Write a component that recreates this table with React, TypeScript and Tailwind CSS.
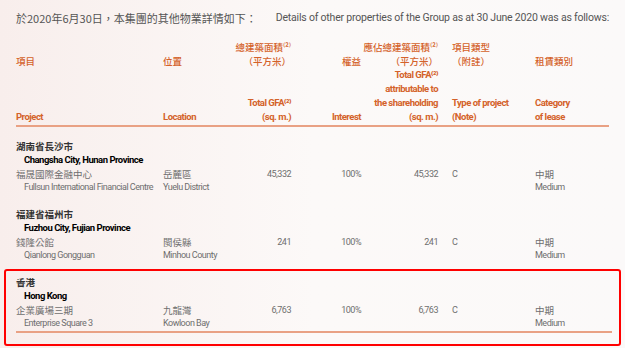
import React from 'react';

type Prop = {
  provinceZh: string;
  provinceEn: string;
  nameZh: string;
  nameEn: string;
  locZh: string;
  locEn: string;
  gfa: string;
  interest: string;
  attr: string;
  type: string;
};

const rows: Prop[] = [
  {
    provinceZh: '湖南省長沙市',
    provinceEn: 'Changsha City, Hunan Province',
    nameZh: '福晟國際金融中心',
    nameEn: 'Fullsun International Financial Centre',
    locZh: '岳麓區',
    locEn: 'Yuelu District',
    gfa: '45,332',
    interest: '100%',
    attr: '45,332',
    type: 'C',
  },
  {
    provinceZh: '福建省福州市',
    provinceEn: 'Fuzhou City, Fujian Province',
    nameZh: '錢隆公館',
    nameEn: 'Qianlong Gongguan',
    locZh: '閩侯縣',
    locEn: 'Minhou County',
    gfa: '241',
    interest: '100%',
    attr: '241',
    type: 'C',
  },
];

const hk: Prop = {
  provinceZh: '香港',
  provinceEn: 'Hong Kong',
  nameZh: '企業廣場三期',
  nameEn: 'Enterprise Square 3',
  locZh: '九龍灣',
  locEn: 'Kowloon Bay',
  gfa: '6,763',
  interest: '100%',
  attr: '6,763',
  type: 'C',
};

const cols = 'grid grid-cols-[147px_77px_51px_70px_77px_97px_73px] whitespace-nowrap';
const zhFont = "font-['Noto_Sans_CJK_TC',sans-serif]";
// condensed look for the small English text
const en = 'text-[9px] tracking-[-0.5px]';

function PropertyRow({ p }: { p: Prop }) {
  return (
    <div className="text-[#6e6e6e]">
      <div className={`text-[9.5px] leading-[14px] font-bold text-[#333] ${zhFont}`}>{p.provinceZh}</div>
      <div className="pl-2 text-[9.5px] tracking-[-0.5px] leading-[14px] font-bold text-black">{p.provinceEn}</div>
      <div className={cols}>
        <div>
          <div className={`text-[9.5px] leading-[14px] ${zhFont}`}>{p.nameZh}</div>
          <div className={`pl-2 leading-[13px] ${en}`}>{p.nameEn}</div>
        </div>
        <div>
          <div className={`text-[9.5px] leading-[14px] ${zhFont}`}>{p.locZh}</div>
          <div className={`leading-[13px] ${en}`}>{p.locEn}</div>
        </div>
        <div className={`text-right leading-[14px] ${en}`}>{p.gfa}</div>
        <div className={`text-right leading-[14px] ${en}`}>{p.interest}</div>
        <div className={`text-right leading-[14px] ${en}`}>{p.attr}</div>
        <div className={`pl-[14px] leading-[14px] ${en}`}>{p.type}</div>
        <div>
          <div className={`text-[9.5px] leading-[14px] ${zhFont}`}>中期</div>
          <div className={`leading-[13px] ${en}`}>Medium</div>
        </div>
      </div>
    </div>
  );
}

function HeadCell({ zh, en, align = 'left', pl = '' }: { zh: string[]; en: string[]; align?: 'left' | 'right'; pl?: string }) {
  const a = align === 'right' ? 'text-right items-end' : 'text-left items-start';
  return (
    <div className={`flex flex-col justify-between h-[84px] ${a} ${pl}`}>
      <div className={`flex flex-col justify-end h-[28px] text-[9.5px] leading-[14px] font-medium ${zhFont}`}>
        {zh.map((t, i) => (
          <div key={i}>{t}</div>
        ))}
      </div>
      <div className="text-[9.5px] tracking-[-0.5px] leading-[14px] font-bold">
        {en.map((t, i) => (
          <div key={i}>{t}</div>
        ))}
      </div>
    </div>
  );
}

export default function App() {
  return (
    <div className="w-[625px] h-[348px] overflow-hidden bg-gradient-to-r from-[#f8eeec] via-[#fcf9f8] to-[#fbf9f9] font-['Roboto','Noto_Sans_CJK_TC',sans-serif]">
      <div className="flex items-center h-[36px] px-[16px] text-[#555] whitespace-nowrap">
        <span className={`text-[11px] w-[265px] ${zhFont}`}>於2020年6月30日，本集團的其他物業詳情如下：</span>
        <span className="text-[10.5px] tracking-[-0.2px]">Details of other properties of the Group as at 30 June 2020 was as follows:</span>
      </div>

      <div className="px-[16px]">
        <div className={`${cols} text-[#d4622a] pt-[4px]`}>
          <HeadCell zh={['項目']} en={['Project']} />
          <HeadCell zh={['位置']} en={['Location']} />
          <HeadCell zh={['總建築面積⁽²⁾', '（平方米）']} en={['Total GFA⁽²⁾', '(sq. m.)']} align="right" />
          <HeadCell zh={['權益']} en={['Interest']} align="right" />
          <HeadCell
            zh={['應佔總建築面積⁽²⁾', '（平方米）']}
            en={['Total GFA⁽²⁾', 'attributable to', 'the shareholding', '(sq. m.)']}
            align="right"
          />
          <HeadCell zh={['項目類型', '（附註）']} en={['Type of project', '(Note)']} pl="pl-[14px]" />
          <HeadCell zh={['租賃類別']} en={['Category', 'of lease']} />
        </div>
        <div className="h-[2px] bg-[#e9a184] mt-[1px]" />

        <div className="flex flex-col gap-[13px] pt-[12px]">
          {rows.map((p) => (
            <PropertyRow key={p.nameEn} p={p} />
          ))}
        </div>

        <div className="mt-[7px] -mx-[12px] border-2 border-[#ff0000] rounded-[3px] pl-[10px] pr-[7px] pt-[4px] pb-[11px]">
          <PropertyRow p={hk} />
          <div className="h-[1.5px] bg-[#e9a184] mt-[1px]" />
        </div>
      </div>
    </div>
  );
}
